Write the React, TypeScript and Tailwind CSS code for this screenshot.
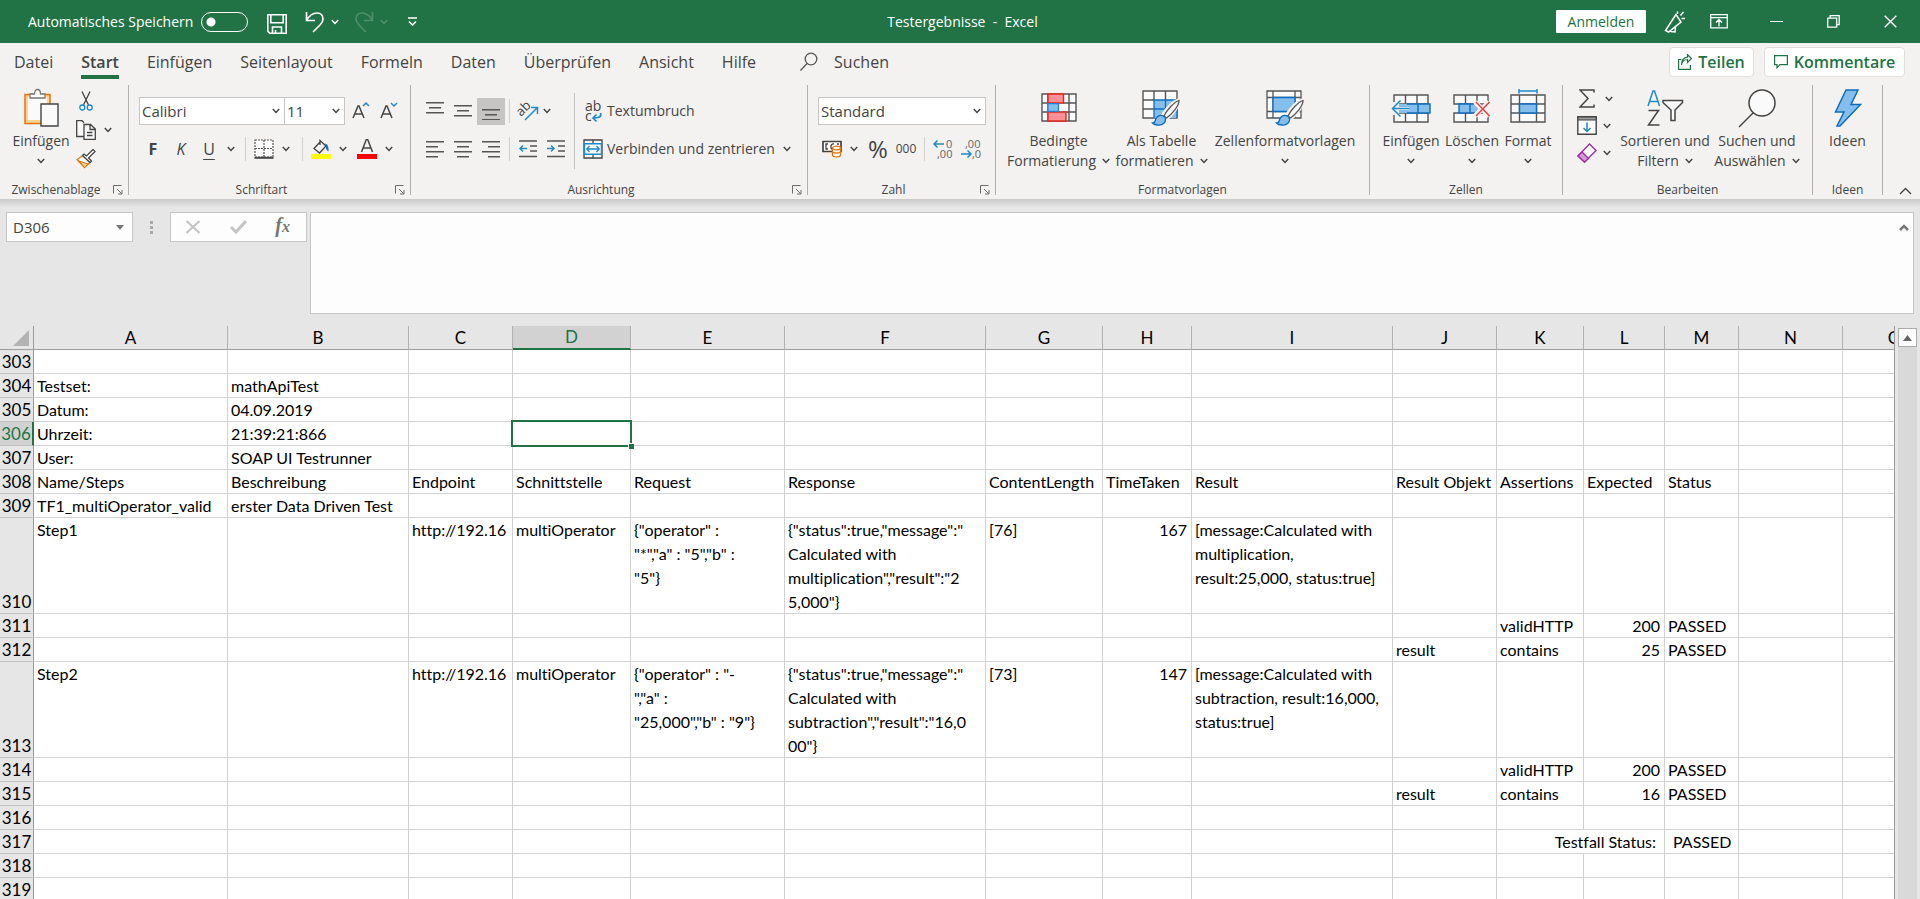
import { useState } from "react";
import type { ReactNode } from "react";

interface Column {
    id: string;
    width: string;
}

interface Row {
    n: number;
    tall?: boolean;
    cells?: Record<string, string>;
}

const COLUMNS: Column[] = [
    { id: "A", width: "w-[194px]" },
    { id: "B", width: "w-[181px]" },
    { id: "C", width: "w-[104px]" },
    { id: "D", width: "w-[118px]" },
    { id: "E", width: "w-[154px]" },
    { id: "F", width: "w-[201px]" },
    { id: "G", width: "w-[117px]" },
    { id: "H", width: "w-[89px]" },
    { id: "I", width: "w-[201px]" },
    { id: "J", width: "w-[104px]" },
    { id: "K", width: "w-[87px]" },
    { id: "L", width: "w-[81px]" },
    { id: "M", width: "w-[74px]" },
    { id: "N", width: "w-[104px]" },
    { id: "O", width: "w-[104px]" },
];

const ROWS: Row[] = [
    { n: 303 },
    { n: 304, cells: { A: "Testset:", B: "mathApiTest" } },
    { n: 305, cells: { A: "Datum:", B: "04.09.2019" } },
    { n: 306, cells: { A: "Uhrzeit:", B: "21:39:21:866" } },
    { n: 307, cells: { A: "User:", B: "SOAP UI Testrunner" } },
    {
        n: 308,
        cells: {
            A: "Name/Steps", B: "Beschreibung", C: "Endpoint", D: "Schnittstelle", E: "Request", F: "Response",
            G: "ContentLength", H: "TimeTaken", I: "Result", J: "Result Objekt", K: "Assertions", L: "Expected", M: "Status",
        },
    },
    { n: 309, cells: { A: "TF1_multiOperator_valid", B: "erster Data Driven Test" } },
    {
        n: 310,
        tall: true,
        cells: {
            A: "Step1",
            C: "http://192.16",
            D: "multiOperator",
            E: '{"operator" :\n"*","a" : "5","b" :\n"5"}',
            F: '{"status":true,"message":"\nCalculated with\nmultiplication","result":"2\n5,000"}',
            G: "[76]",
            H: "167",
            I: "[message:Calculated with\nmultiplication,\nresult:25,000, status:true]",
        },
    },
    { n: 311, cells: { K: "validHTTP", L: "200", M: "PASSED" } },
    { n: 312, cells: { J: "result", K: "contains", L: "25", M: "PASSED" } },
    {
        n: 313,
        tall: true,
        cells: {
            A: "Step2",
            C: "http://192.16",
            D: "multiOperator",
            E: '{"operator" : "-\n","a" :\n"25,000","b" : "9"}',
            F: '{"status":true,"message":"\nCalculated with\nsubtraction","result":"16,0\n00"}',
            G: "[73]",
            H: "147",
            I: "[message:Calculated with\nsubtraction, result:16,000,\nstatus:true]",
        },
    },
    { n: 314, cells: { K: "validHTTP", L: "200", M: "PASSED" } },
    { n: 315, cells: { J: "result", K: "contains", L: "16", M: "PASSED" } },
    { n: 316 },
    { n: 317, cells: { K: "Testfall Status:", M: "PASSED" } },
    { n: 318 },
    { n: 319 },
];

const TABS = ["Datei", "Start", "Einfügen", "Seitenlayout", "Formeln", "Daten", "Überprüfen", "Ansicht", "Hilfe"];

/* ---------- small helpers ---------- */

function Chevron({ className = "" }: { className?: string }) {
    return (
        <svg width="8" height="6" viewBox="0 0 8 6" fill="none" stroke="currentColor" strokeWidth="1.5" className={`inline-block shrink-0 ${className}`}>
            <path d="M.8 1 4 4.4 7.2 1" />
        </svg>
    );
}

function MenuButton({ label, className = "w-4" }: { label: string; className?: string }) {
    return (
        <button aria-label={label} className={`flex h-[27px] items-center justify-center ${className}`}>
            <Chevron />
        </button>
    );
}

function IconButton({ label, active = false, children }: { label: string; active?: boolean; children: ReactNode }) {
    return (
        <button aria-label={label} className={`flex h-[27px] w-7 shrink-0 items-center justify-center ${active ? "bg-[#c6c5c4]" : ""}`}>
            {children}
        </button>
    );
}

function Separator() {
    return <span className="mx-1 h-6 w-px shrink-0 bg-[#d2d0ce]" />;
}

function Group({ title, width, launcher = false, children }: { title: string; width: string; launcher?: boolean; children: ReactNode }) {
    return (
        <section className={`flex h-[110px] shrink-0 flex-col border-r border-[#b1afad] ${width}`}>
            <div className="flex flex-1">{children}</div>
            <div className="flex h-2.5 items-center text-xs">
                <span className="flex-1 text-center">{title}</span>
                {launcher && (
                    <button aria-label={`${title}: Optionen`} className="mr-1 flex w-3 justify-center">
                        <svg width="10" height="10" viewBox="0 0 10 10" fill="none" stroke="#6b6b6b">
                            <path d="M.5 8.500V.5H8.500M4 4l4.500 4.500M9 5v4H5" />
                        </svg>
                    </button>
                )}
            </div>
        </section>
    );
}

function BigButton({ icon, lines, width, menu = true }: { icon: ReactNode; lines: string[]; width: string; menu?: boolean }) {
    return (
        <button className={`flex flex-col items-center text-sm leading-5 whitespace-nowrap ${width}`}>
            <span className="flex h-[46px] items-center justify-center">{icon}</span>
            <span>{lines[0]}</span>
            <span className="flex h-5 items-center gap-1.5">
                {lines[1]}
                {menu && <Chevron />}
            </span>
        </button>
    );
}

function Lines({ widths, align, y = 0 }: { widths: number[]; align: "left" | "center" | "right"; y?: number }) {
    return (
        <svg width="18" height="18" viewBox="0 0 18 18" fill="#555">
            {widths.map((w, i) => (
                <rect key={i} x={align === "left" ? 0 : align === "right" ? 18 - w : (18 - w) / 2} y={y + i * 5} width={w} height="1.500" />
            ))}
        </svg>
    );
}

/* ---------- title bar ---------- */

function TitleBar() {
    const [autoSave, setAutoSave] = useState(false);

    return (
        <header className="flex h-[43px] shrink-0 items-center bg-[#217346] text-sm text-white">
            <div className="flex flex-1 items-center pl-7">
                <label htmlFor="autosave" className="w-[173px]">Automatisches Speichern</label>
                <input
                    id="autosave"
                    type="checkbox"
                    checked={autoSave}
                    onChange={(e) => setAutoSave(e.target.checked)}
                    className="h-5 w-[47px] appearance-none rounded-full border border-white bg-[radial-gradient(circle_at_9px_9px,white_4px,transparent_5px)]"
                />
                <button aria-label="Speichern" className="mt-1 ml-[19px]">
                    <svg width="20" height="20" viewBox="0 0 20 20" fill="none" stroke="#fff" strokeWidth="1.6">
                        <path d="M.8.8h18.400v18.400H2.800L.8 17.200ZM3.800.8v8h12.400v-8M5.500 19v-6h9v6M8.500 19v-3" />
                    </svg>
                </button>
                <button aria-label="Rückgängig" className="ml-[18px]">
                    <svg width="20" height="22" viewBox="0 0 20 22" fill="none" stroke="#fff" strokeWidth="1.700">
                        <path d="M1.500 1v8.500H10M1.500 9.500C4 5 8 2 12 2c4 0 6 3 6 6 0 2-1 4-3 6l-7 7" />
                    </svg>
                </button>
                <MenuButton label="Rückgängig-Liste" className="ml-0.5 w-4" />
                <button aria-label="Wiederholen" className="ml-[11px] text-[#4e8f6b]">
                    <svg width="20" height="22" viewBox="0 0 20 22" fill="none" stroke="currentColor" strokeWidth="1.700">
                        <path d="M18.500 1v8.500H10M18.500 9.500C16 5 12 2 8 2 4 2 2 5 2 8c0 2 1 4 3 6l7 7" />
                    </svg>
                </button>
                <span className="text-[#4e8f6b]"><MenuButton label="Wiederholen-Liste" className="ml-0.5 w-4" /></span>
                <button aria-label="Symbolleiste anpassen" className="ml-4">
                    <svg width="9" height="9" viewBox="0 0 9 9" fill="none" stroke="#fff" strokeWidth="1.500">
                        <path d="M0 1h9M1 4.500 4.500 8 8 4.500" />
                    </svg>
                </button>
            </div>
            <h1 className="whitespace-pre">Testergebnisse  -  Excel</h1>
            <div className="flex flex-1 items-center justify-end pr-[23px]">
                <button className="h-[23px] w-[90px] rounded-[1px] bg-white leading-[23px] text-[#217346]">Anmelden</button>
                <button aria-label="Neuigkeiten" className="ml-[18px]">
                    <svg width="22" height="22" viewBox="0 0 22 22" fill="none" stroke="#fff" strokeWidth="1.500">
                        <path d="M12 3.500 1.500 19.500l3 1.500L17 11ZM6.500 20.500l4.500.5.5-5M13.500 3V.5M16.500 4.500l3-3.500M17.500 7.500h3.500" />
                    </svg>
                </button>
                <button aria-label="Menüband anzeigen" className="ml-6">
                    <svg width="18" height="15" viewBox="0 0 18 15" fill="none" stroke="#fff" strokeWidth="1.300">
                        <path d="M.7.7h16.600v13.200H.7ZM.7 3.700h16.600M9 12.500V6M6 8.500l3-3 3 3" />
                    </svg>
                </button>
                <button aria-label="Minimieren" className="ml-[42px] h-px w-[13px] bg-white" />
                <button aria-label="Verkleinern" className="ml-11">
                    <svg width="13" height="13" viewBox="0 0 13 13" fill="none" stroke="#fff" strokeWidth="1.300">
                        <path d="M.7 3.200h9v9h-9ZM3.200 3V.7h9v9H10" />
                    </svg>
                </button>
                <button aria-label="Schließen" className="ml-11">
                    <svg width="13" height="13" viewBox="0 0 13 13" fill="none" stroke="#fff" strokeWidth="1.400">
                        <path d="m.7.7 11.600 11.600M12.300.7.7 12.300" />
                    </svg>
                </button>
            </div>
        </header>
    );
}

/* ---------- tabs ---------- */

function TabBar() {
    return (
        <nav className="flex h-[42px] shrink-0 items-center pb-1 text-base leading-5">
            {TABS.map((tab) => (
                <button
                    key={tab}
                    className={`mx-3.5 flex h-[34px] flex-col justify-center border-y-4 border-transparent ${tab === "Start" ? "border-b-[#217346] font-semibold" : ""}`}
                >
                    {tab}
                </button>
            ))}
            <button className="ml-[30px] flex items-center gap-4">
                <svg width="18" height="20" viewBox="0 0 18 20" fill="none" stroke="#555" strokeWidth="1.300">
                    <circle cx="11" cy="7" r="5.800" />
                    <path d="m7 11.500-6.500 7" />
                </svg>
                Suchen
            </button>
            <div className="ml-auto flex gap-2.5 pr-[15px] font-semibold text-[#217346]">
                <button className="flex h-[30px] w-[85px] items-center justify-center gap-1.5 rounded border border-[#e1dfdd] bg-white">
                    <svg width="14" height="16" viewBox="0 0 14 16" fill="none" stroke="currentColor" strokeWidth="1.200">
                        <path d="M3.500 5.500H.6v9.800h11.800V11M3.500 11c.5-4 3-5.500 6-5.500V8.500l4-4-4-4v2.700C5.500 3.500 3.500 7 3.500 11Z" />
                    </svg>
                    Teilen
                </button>
                <button className="flex h-[30px] w-[141px] items-center justify-center gap-1.5 rounded border border-[#e1dfdd] bg-white">
                    <svg width="14" height="14" viewBox="0 0 14 14" fill="none" stroke="currentColor" strokeWidth="1.200">
                        <path d="M.6.6h12.800v9H6L3 12.800V9.600H.6Z" />
                    </svg>
                    Kommentare
                </button>
            </div>
        </nav>
    );
}

/* ---------- ribbon icons ---------- */

const PasteIcon = () => (
    <svg width="36" height="40" viewBox="0 0 36 40" fill="none">
        <path d="M2 6.500h25v29H2Z" fill="#fbd58f" stroke="#e8730c" strokeWidth="1.500" />
        <path d="M5 9h19v23H5Z" fill="#fafafa" />
        <path d="M7 10V6h4.500c0-6 6-6 6 0H22v4Z" fill="#fff" stroke="#777" strokeWidth="1.300" />
        <path d="M18 16h17v22H18Z" fill="#fafafa" stroke="#444" strokeWidth="1.400" />
    </svg>
);

const CutIcon = () => (
    <svg width="14" height="20" viewBox="0 0 14 20" fill="none" strokeWidth="1.300">
        <path d="M3 .5 9.500 14M11 .5 4.500 14" stroke="#444" />
        <circle cx="3.300" cy="16.500" r="2.500" stroke="#1e8bcd" />
        <circle cx="10.700" cy="16.500" r="2.500" stroke="#1e8bcd" />
    </svg>
);

const CopyIcon = () => (
    <svg width="20" height="20" viewBox="0 0 20 20" fill="#fafafa" stroke="#444" strokeWidth="1.300">
        <path d="M8 16.500H.7V.7H6l2 2" />
        <path d="M8 4.500h6.500L19.300 9v10.300H8ZM14 4.500V9.500h5M11 12.500h5.500M11 15.500h5.500" />
    </svg>
);

const BrushIcon = () => (
    <svg width="20" height="20" viewBox="0 0 20 20" fill="none">
        <path d="M7 6.500 1 10.500 8.500 18.500 14 13.500Z" fill="#fff" stroke="#e8730c" strokeWidth="1.300" />
        <path d="m3 12 9 3-3.500 3.500Z" fill="#fbd58f" stroke="#e8730c" />
        <path d="m6.500 6.500 7.500 7 1.500-1.500-3-3 6.500-6.500-2-2L10.500 7 8 5Z" fill="#fff" stroke="#444" strokeWidth="1.300" />
    </svg>
);

const FillIcon = () => (
    <svg width="20" height="20" viewBox="0 0 20 20" fill="none">
        <path d="M9.500 2.500 3 9.500l5.500 4.500L15 7 9 1.500V6" stroke="#444" strokeWidth="1.300" />
        <path d="M13.500 4.500c3 0 4.500 3 4 8-2-1-3-3-2.500-5.500Z" fill="#1e6fb8" />
        <rect y="15" width="20" height="5" fill="#ff0" />
    </svg>
);

const BordersIcon = () => (
    <svg width="20" height="20" viewBox="0 0 20 20" fill="none" stroke="#555">
        <path d="M1 1h18v17H1ZM10 1v17M1 9.500h18" fill="#fff" strokeDasharray="2 1" strokeWidth="1.200" />
        <path d="M.5 18.800h19" strokeWidth="2" stroke="#444" />
    </svg>
);

const OrientationIcon = () => (
    <svg width="22" height="22" viewBox="0 0 22 22" fill="none" className="overflow-visible">
        <text x="1" y="14" fontSize="13" fill="#444" transform="rotate(-45 6 12)">ab</text>
        <path d="M8 20 20 8M14 7.500h6.500V14" stroke="#1e8bcd" strokeWidth="1.500" />
    </svg>
);

const IndentIcon = ({ right = false }: { right?: boolean }) => (
    <svg width="18" height="18" viewBox="0 0 18 18" fill="none" stroke="#555" strokeWidth="1.500">
        <path d="M0 1h18M11 6h7M11 11h7M0 16.500h18" />
        <path d={right ? "M0 8.500h7M4 5.500l3 3-3 3" : "M8 8.500H1M4 5.500l-3 3 3 3"} stroke="#1e8bcd" />
    </svg>
);

const WrapIcon = () => (
    <svg width="18" height="21" viewBox="0 0 18 21" fill="none" className="overflow-visible">
        <text x="1" y="10" fontSize="14" fill="#444">ab</text>
        <text x="1" y="20" fontSize="14" fill="#444">c</text>
        <path d="M16.500 12c1.500 4-2 5-7 5M12.500 13.500 9 17l3.500 3.500" stroke="#1e8bcd" strokeWidth="1.700" />
    </svg>
);

const MergeIcon = () => (
    <svg width="20" height="20" viewBox="0 0 20 20" fill="none">
        <path d="M1 1h18v18H1ZM10 1v4M10 15v4" fill="#fafafa" stroke="#444" strokeWidth="1.300" />
        <path d="M1.500 4.700h17v10.600h-17Z" fill="#fafafa" stroke="#1e8bcd" strokeWidth="1.500" />
        <path d="M4 10h12M6.500 7 3.800 10l2.700 3M13.500 7l2.700 3-2.700 3" stroke="#1e8bcd" strokeWidth="1.300" />
    </svg>
);

const CurrencyIcon = () => (
    <svg width="20" height="18" viewBox="0 0 20 18" fill="none">
        <path d="M1 1.500h18v10H1Z" fill="#fff" stroke="#444" strokeWidth="1.700" />
        <path d="M6 4H4v5h2M12 4c-4-1-4 6-1 5M15 4h2" stroke="#444" strokeWidth="1.300" />
        <path d="M10.500 8v7c0 2.500 8 2.500 8 0V8Z" fill="#fff" stroke="#e8730c" strokeWidth="1.300" />
        <ellipse cx="14.500" cy="8" rx="4" ry="1.800" fill="#fff" stroke="#e8730c" strokeWidth="1.300" />
        <path d="M10.500 11.500c0 2 8 2 8 0" stroke="#e8730c" strokeWidth="1.300" />
    </svg>
);

const DecimalIcon = ({ more = false }: { more?: boolean }) => (
    <svg width="20" height="22" viewBox="0 0 20 22" fill="none" className="overflow-visible">
        <text x={more ? 13 : 4} y="10" fontSize="11" fill="#666">{more ? "0" : ",00"}</text>
        <text x={more ? 4 : 11} y="20" fontSize="11" fill="#666">{more ? ",00" : ",0"}</text>
        <path d={more ? "M11 6H1M4.500 2.500 1 6l3.500 3.500" : "M0 16h10M6.500 12.500 10 16l-3.500 3.500"} stroke="#1e8bcd" strokeWidth="1.500" />
    </svg>
);

const ConditionalIcon = () => (
    <svg width="36" height="30" viewBox="0 0 36 30" fill="none">
        <path d="M1 1h34v27H1ZM1 10h34M1 19h34M7 1v27M28 1v27" fill="#fafafa" stroke="#555" strokeWidth="1.400" />
        <path d="M17 10.500h5v8h-5Z" fill="#fafafa" />
        <path d="M7 1h15.500v9H7ZM7 19h18v9H7Z" fill="#ff8f94" stroke="#e0281e" strokeWidth="1.400" />
        <path d="M7 10.700h10.500v7.600H7Z" fill="#83beec" stroke="#2a7fc9" strokeWidth="1.200" />
    </svg>
);

const PaintBrush = () => (
    <>
        <path d="M36.500 10c-5 1-13 9-16.500 16l4 3.500c6-4 13-13 12.500-19.500Z" fill="#fafafa" stroke="#f3f2f1" strokeWidth="3" />
        <path d="M37 10.500C32 12 25 20 22 26l2.500 2C30 24 37 16 37 10.500Z" fill="#fafafa" stroke="#555" strokeWidth="1.300" />
        <path d="M10.500 33c3 0 2.500-2 3.500-4.500 2-4 7-4 9-1 2 4-2 8-7 7.500-2.500 0-4.500-.7-5.500-2Z" fill="#83beec" stroke="#0f6cbd" strokeWidth="1.300" />
    </>
);

const TableFormatIcon = () => (
    <svg width="39" height="36" viewBox="0 0 39 36" fill="none">
        <path d="M1 1h34v27H1Z" fill="#fafafa" stroke="#555" strokeWidth="1.400" />
        <path d="M12 10h23v18H12Z" fill="#83beec" />
        <path d="M1 10h11M1 19h11M12 1v9M23.500 1v9" stroke="#555" strokeWidth="1.400" />
        <path d="M12 28V10h23v18M12 19h23M23.500 10v18" stroke="#0f6cbd" strokeWidth="1.300" />
        <PaintBrush />
    </svg>
);

const CellStylesIcon = () => (
    <svg width="39" height="36" viewBox="0 0 39 36" fill="none">
        <path d="M1 1h34v27H1ZM1 7.500h34M1 21.500h34M7 1v27M29 1v27" fill="#fafafa" stroke="#555" strokeWidth="1.300" />
        <path d="M7 7.500h22v14H7Z" fill="#83beec" stroke="#0f6cbd" strokeWidth="1.300" />
        <PaintBrush />
    </svg>
);

const InsertCellsIcon = () => (
    <svg width="40" height="38" viewBox="0 0 40 38" fill="none">
        <path d="M3 6h34v27H3ZM3 15h34M3 24h34M14.500 6v27M26 6v27" fill="#fafafa" stroke="#555" strokeWidth="1.400" />
        <path d="M0 13h8v13H0Z" fill="#f3f2f1" />
        <path d="M8 15h31v9H8Z" fill="#83beec" />
        <path d="M16 15h23v9H16M27 15v9" stroke="#0f6cbd" strokeWidth="1.400" />
        <path d="M18 19.500H1.500M9.500 11l-8.500 8.500L9.500 28" stroke="#f3f2f1" strokeWidth="3" />
        <path d="M18 19.500H1.500M9.500 11.500l-8 8 8 8" stroke="#1e8bcd" strokeWidth="1.500" />
    </svg>
);

const DeleteCellsIcon = () => (
    <svg width="38" height="38" viewBox="0 0 38 38" fill="none">
        <path d="M1 6h34v9H1ZM1 24h34v9H1ZM12.500 6v9M24 6v9M12.500 24v9M24 24v9" fill="#fafafa" stroke="#555" strokeWidth="1.400" />
        <path d="M6 15h22v9H6Z" fill="#83beec" />
        <path d="M24 15H6v9h18M17 15v9" stroke="#0f6cbd" strokeWidth="1.400" />
        <path d="m22 13 14 14M36 13 22 27" stroke="#f3f2f1" strokeWidth="5" />
        <path d="m23 13 13.500 14M36.500 13 23 27" stroke="#f03e3e" strokeWidth="1.500" />
    </svg>
);

const FormatCellsIcon = () => (
    <svg width="36" height="38" viewBox="0 0 36 38" fill="none">
        <path d="M9 2h18M9 0v4.500M27 0v4.500" stroke="#1e8bcd" strokeWidth="1.500" />
        <path d="M1 6h34v27H1ZM1 15h34M1 24h34M9.500 6v27M26.500 6v27" fill="#fafafa" stroke="#555" strokeWidth="1.400" />
        <path d="M9.500 15h17v9h-17Z" fill="#83beec" stroke="#0f6cbd" strokeWidth="1.400" />
    </svg>
);

const SumIcon = () => (
    <svg width="16" height="19" viewBox="0 0 16 19" fill="none" stroke="#444" strokeWidth="1.500">
        <path d="M15 3.500V1H1l8 8.500L1 18h14v-2.500" />
    </svg>
);

const FillDownIcon = () => (
    <svg width="20" height="19" viewBox="0 0 20 19" fill="none">
        <path d="M.8.8h18.400v17.400H.8Z" fill="#fafafa" stroke="#444" strokeWidth="1.400" />
        <path d="M1 1h18v3H1Z" fill="#999" stroke="#444" />
        <path d="M10 6.500V15M6.500 12l3.500 3.500 3.500-3.500" stroke="#1e8bcd" strokeWidth="1.500" />
    </svg>
);

const EraserIcon = () => (
    <svg width="20" height="20" viewBox="0 0 20 20" fill="#fafafa" stroke="#9b2fa0" strokeWidth="1.400">
        <path d="M1 13 12.500 1 19 7.500 7.500 19Z" />
        <path d="m1 13 4-4 6.500 6.500-4 3.500Z" fill="#d59bd8" />
    </svg>
);

const SortFilterIcon = () => (
    <svg width="38" height="42" viewBox="0 0 38 42" fill="none">
        <path d="m2 19 5-15h1.500l5 15M3.500 14.500h8.500" stroke="#1e8bcd" strokeWidth="1.500" />
        <path d="M2.500 23.500h10L2.500 38h11" stroke="#444" strokeWidth="1.500" />
        <path d="M17 13.500h19.500v2L29 23v10.500h-4V23l-8-7.500Z" fill="#fafafa" stroke="#444" strokeWidth="1.500" />
    </svg>
);

const FindIcon = () => (
    <svg width="38" height="40" viewBox="0 0 38 40" fill="none" stroke="#444" strokeWidth="1.500">
        <circle cx="24" cy="15" r="13" fill="#fafafa" />
        <path d="M15 25 1 39" />
    </svg>
);

const IdeasIcon = () => (
    <svg width="28" height="40" viewBox="0 0 28 40">
        <path d="M12 2h12l-7 14.500h9.500L6 38H3l7-14H1.500Z" fill="#83beec" stroke="#0f6cbd" strokeWidth="1.500" />
    </svg>
);

/* ---------- ribbon ---------- */

function RibbonSelect({ label, value, className }: { label: string; value: string; className: string }) {
    return (
        <div className={`grid h-7 items-center border border-[#c8c6c4] bg-white text-[15px] ${className}`}>
            <select aria-label={label} className="col-start-1 row-start-1 w-full appearance-none px-0.5 outline-none">
                <option>{value}</option>
            </select>
            <Chevron className="pointer-events-none col-start-1 row-start-1 mr-1 justify-self-end" />
        </div>
    );
}

function Ribbon() {
    return (
        <div className="flex h-[114px] shrink-0">
            <Group title="Zwischenablage" width="w-[129px]" launcher>
                <div className="ml-2.5 flex"><BigButton icon={<PasteIcon />} lines={["Einfügen"]} width="w-[62px]" /></div>
                <div className="flex flex-col gap-0.5 pt-0.5">
                    <IconButton label="Ausschneiden"><CutIcon /></IconButton>
                    <div className="flex">
                        <IconButton label="Kopieren"><CopyIcon /></IconButton>
                        <MenuButton label="Kopieren-Optionen" />
                    </div>
                    <IconButton label="Format übertragen"><BrushIcon /></IconButton>
                </div>
            </Group>

            <Group title="Schriftart" width="w-[282px]" launcher>
                <div className="flex flex-col gap-2 pt-2.5 pl-2.5">
                    <div className="flex h-8 items-center">
                        <RibbonSelect label="Schriftart" value="Calibri" className="w-[146px]" />
                        <RibbonSelect label="Schriftgrad" value="11" className="mr-0.5 w-[60px] border-l-0" />
                        <IconButton label="Schriftgrad vergrößern">
                            <svg width="18" height="20" viewBox="0 0 18 20" fill="none" strokeWidth="1.500">
                                <path d="M1 17 6 5h1l5 12M2.500 13h8" stroke="#444" />
                                <path d="m11 5 3-3 3 3" stroke="#1e8bcd" />
                            </svg>
                        </IconButton>
                        <IconButton label="Schriftgrad verkleinern">
                            <svg width="18" height="20" viewBox="0 0 18 20" fill="none" strokeWidth="1.500">
                                <path d="M1 17 6 5h1l5 12M2.500 13h8" stroke="#444" />
                                <path d="m11 2 3 3 3-3" stroke="#1e8bcd" />
                            </svg>
                        </IconButton>
                    </div>
                    <div className="flex h-7 items-center text-base">
                        <IconButton label="Fett"><b>F</b></IconButton>
                        <IconButton label="Kursiv"><i>K</i></IconButton>
                        <IconButton label="Unterstrichen"><u className="underline-offset-4">U</u></IconButton>
                        <MenuButton label="Unterstreichen-Optionen" className="mr-0.5 w-4" />
                        <Separator />
                        <IconButton label="Rahmen"><BordersIcon /></IconButton>
                        <MenuButton label="Rahmen-Optionen" className="mr-1 w-4" />
                        <Separator />
                        <IconButton label="Füllfarbe"><FillIcon /></IconButton>
                        <MenuButton label="Füllfarben-Auswahl" className="mr-0.5 w-4" />
                        <IconButton label="Schriftfarbe">
                            <svg width="20" height="20" viewBox="0 0 20 20" fill="none">
                                <path d="M4.500 13 9.500 0h1l5 13M6 9h8" stroke="#444" strokeWidth="1.500" />
                                <rect y="15" width="20" height="5" fill="#f00" />
                            </svg>
                        </IconButton>
                        <MenuButton label="Schriftfarben-Auswahl" />
                    </div>
                </div>
            </Group>

            <Group title="Ausrichtung" width="w-[397px]" launcher>
                <div className="flex flex-col gap-2 pt-2.5 pl-2.5">
                    <div className="flex h-8 items-center">
                        <IconButton label="Oben"><Lines widths={[18, 12, 18]} align="center" y={0} /></IconButton>
                        <IconButton label="Mitte"><Lines widths={[18, 12, 18]} align="center" y={3} /></IconButton>
                        <IconButton label="Unten" active><Lines widths={[18, 12, 18]} align="center" y={7} /></IconButton>
                        <Separator />
                        <IconButton label="Textausrichtung"><OrientationIcon /></IconButton>
                        <MenuButton label="Textausrichtung-Optionen" className="w-2.5" />
                    </div>
                    <div className="flex h-7 items-center">
                        <IconButton label="Linksbündig"><Lines widths={[18, 12, 18, 12]} align="left" y={1} /></IconButton>
                        <IconButton label="Zentriert"><Lines widths={[18, 12, 18, 12]} align="center" y={1} /></IconButton>
                        <IconButton label="Rechtsbündig"><Lines widths={[18, 12, 18, 12]} align="right" y={1} /></IconButton>
                        <Separator />
                        <IconButton label="Einzug verkleinern"><IndentIcon /></IconButton>
                        <IconButton label="Einzug vergrößern"><IndentIcon right /></IconButton>
                    </div>
                </div>
                <span className="mx-1 mt-2 h-[76px] w-px bg-[#c8c6c4]" />
                <div className="flex flex-col gap-2 pt-2.5 text-sm">
                    <button className="flex h-8 items-center">
                        <span className="flex w-7 justify-center"><WrapIcon /></span>
                        Textumbruch
                    </button>
                    <div className="flex h-7 items-center">
                        <button className="flex items-center">
                            <span className="flex w-7 justify-center"><MergeIcon /></span>
                            Verbinden und zentrieren
                        </button>
                        <MenuButton label="Verbinden-Optionen" className="ml-1 w-4" />
                    </div>
                </div>
            </Group>

            <Group title="Zahl" width="w-[188px]" launcher>
                <div className="flex flex-col gap-2 pt-2.5 pl-2.5">
                    <div className="flex h-8 items-center">
                        <RibbonSelect label="Zahlenformat" value="Standard" className="w-[168px]" />
                    </div>
                    <div className="flex h-7 items-center">
                        <IconButton label="Buchhaltungsformat"><CurrencyIcon /></IconButton>
                        <MenuButton label="Währung wählen" className="mr-0.5 w-4" />
                        <IconButton label="Prozent"><span className="text-2xl leading-6">%</span></IconButton>
                        <IconButton label="Tausendertrennzeichen"><span className="text-xs">000</span></IconButton>
                        <Separator />
                        <IconButton label="Dezimalstelle hinzufügen"><DecimalIcon more /></IconButton>
                        <IconButton label="Dezimalstelle entfernen"><DecimalIcon /></IconButton>
                    </div>
                </div>
            </Group>

            <Group title="Formatvorlagen" width="w-[374px]">
                <div className="flex pl-2">
                    <BigButton icon={<ConditionalIcon />} lines={["Bedingte", "Formatierung"]} width="w-[109px]" />
                    <BigButton icon={<TableFormatIcon />} lines={["Als Tabelle", "formatieren"]} width="w-[97px]" />
                    <BigButton icon={<CellStylesIcon />} lines={["Zellenformatvorlagen"]} width="w-[150px]" />
                </div>
            </Group>

            <Group title="Zellen" width="w-[193px]">
                <div className="flex pl-2.5">
                    <BigButton icon={<InsertCellsIcon />} lines={["Einfügen"]} width="w-[62px]" />
                    <BigButton icon={<DeleteCellsIcon />} lines={["Löschen"]} width="w-[60px]" />
                    <BigButton icon={<FormatCellsIcon />} lines={["Format"]} width="w-[52px]" />
                </div>
            </Group>

            <Group title="Bearbeiten" width="w-[250px]">
                <div className="flex flex-col pl-2.5">
                    <div className="flex"><IconButton label="AutoSumme"><SumIcon /></IconButton><MenuButton label="Summen" /></div>
                    <div className="flex"><IconButton label="Ausfüllen"><FillDownIcon /></IconButton><MenuButton label="Ausfüllen-Optionen" className="w-3" /></div>
                    <div className="flex"><IconButton label="Löschen"><EraserIcon /></IconButton><MenuButton label="Löschen-Optionen" className="w-3" /></div>
                </div>
                <BigButton icon={<SortFilterIcon />} lines={["Sortieren und", "Filtern"]} width="w-[96px]" />
                <BigButton icon={<FindIcon />} lines={["Suchen und", "Auswählen"]} width="w-[88px]" />
            </Group>

            <Group title="Ideen" width="w-[70px]">
                <BigButton icon={<IdeasIcon />} lines={["Ideen"]} width="w-full" menu={false} />
            </Group>

            <div className="flex flex-1 items-end justify-end pr-2 pb-1">
                <button aria-label="Menüband reduzieren">
                    <svg width="13" height="8" viewBox="0 0 13 8" fill="none" stroke="#444" strokeWidth="1.400">
                        <path d="M1 7 6.500 1.500 12 7" />
                    </svg>
                </button>
            </div>
        </div>
    );
}

/* ---------- formula bar ---------- */

function FormulaBar() {
    return (
        <div className="h-[127px] shrink-0 bg-[linear-gradient(#c9c9c9,#e6e6e6_8px)] px-1.5 pt-[13px]">
            <div className="flex items-start">
                <div className="flex h-[30px] w-[127px] items-center border border-[#c6c6c6] bg-[#fdfdfd]">
                    <input aria-label="Namenfeld" defaultValue="D306" className="w-full min-w-0 flex-1 pl-1.5 text-[15px] outline-none" />
                    <button aria-label="Namen anzeigen" className="mr-2">
                        <svg width="8" height="5" viewBox="0 0 8 5" fill="#777"><path d="M0 0h8L4 5Z" /></svg>
                    </button>
                </div>
                <span className="mx-4 flex h-[30px] w-[5px] flex-col items-center justify-center gap-0.5">
                    <i className="h-[3px] w-[3px] bg-[#aaa]" />
                    <i className="h-[3px] w-[3px] bg-[#aaa]" />
                    <i className="h-[3px] w-[3px] bg-[#aaa]" />
                </span>
                <div className="mr-[3px] flex h-[30px] w-[137px] items-center justify-between border border-[#c6c6c6] bg-[#fdfdfd] px-3.5">
                    <button aria-label="Abbrechen">
                        <svg width="16" height="14" viewBox="0 0 16 14" stroke="#c4c4c4" strokeWidth="2.200"><path d="m1.500 1 13 12M14.500 1l-13 12" /></svg>
                    </button>
                    <button aria-label="Eingeben">
                        <svg width="17" height="14" viewBox="0 0 17 14" fill="none" stroke="#c4c4c4" strokeWidth="3"><path d="m1 7 5 5L16 1" /></svg>
                    </button>
                    <button aria-label="Funktion einfügen" className="pr-0.5 font-['Liberation_Serif',serif] text-xl leading-5 font-semibold text-[#777] italic">
                        f<span className="text-base">x</span>
                    </button>
                </div>
                <div className="flex h-[102px] flex-1 border border-[#c6c6c6] bg-[#fdfdfd]">
                    <textarea aria-label="Bearbeitungsleiste" className="flex-1 resize-none px-1 outline-none" />
                    <button aria-label="Nach oben" className="mt-2.5 mr-1 h-2">
                        <svg width="10" height="7" viewBox="0 0 10 7" fill="none" stroke="#777" strokeWidth="2.500"><path d="m1 6 4-4 4 4" /></svg>
                    </button>
                </div>
            </div>
        </div>
    );
}

/* ---------- sheet ---------- */

function SheetRow({ row }: { row: Row }) {
    const selected = row.n === 306;
    const isTotal = row.n === 317;

    return (
        <tr className={row.tall ? "h-24" : "h-6"}>
            <th
                scope="row"
                className={`border-r border-b border-b-[#c3c3c3] p-0 text-center align-bottom text-[17px] font-normal ${selected ? "border-r-2 border-r-[#217346] bg-[#d2d2d2] text-[#217346]" : "border-r-[#9b9b9b] bg-[#e6e6e6]"}`}
            >
                {row.n}
            </th>
            {COLUMNS.map(({ id }) => {
                // the total row spans K and L
                if (isTotal && id === "L") return null;
                const text = row.cells?.[id] ?? "";
                const right = /^\d+$/.test(text);
                const active = selected && id === "D";
                return (
                    <td
                        key={id}
                        colSpan={isTotal && id === "K" ? 2 : 1}
                        className={`border-r border-b border-[#d2d2d2] p-0 align-top whitespace-pre ${active ? "relative" : ""}`}
                    >
                        <div
                            className={`overflow-hidden ${row.tall ? "h-[95px] leading-6" : ""} ${right ? "pr-1 text-right" : isTotal && id === "K" ? "pr-2 text-right" : isTotal ? "pl-2" : "pl-[3px]"}`}
                        >
                            {text}
                        </div>
                        {active && (
                            <div className="absolute -inset-0.5 border-2 border-[#217346]">
                                <span className="absolute -right-1 -bottom-1 h-1.5 w-1.5 border-t border-l border-white bg-[#217346]" />
                            </div>
                        )}
                    </td>
                );
            })}
        </tr>
    );
}

function Sheet() {
    return (
        <main className="flex min-h-0 flex-1 bg-[#e6e6e6]">
            <div className="min-w-0 flex-1 overflow-hidden border-r border-[#9b9b9b]">
                <table className="w-[1947px] table-fixed border-separate border-spacing-0 bg-white font-[Lato,sans-serif] text-base leading-[23px] text-black [font-variant-ligatures:none]">
                    <thead>
                        <tr className="h-6 text-[17px] leading-[22px]">
                            <th className="w-[34px] border-r border-b border-[#9b9b9b] bg-[#e6e6e6] p-0">
                                <button aria-label="Alles auswählen" className="flex w-full justify-end pr-1">
                                    <svg width="16" height="16" viewBox="0 0 16 16" fill="#b3b3b3"><path d="M16 0v16H0Z" /></svg>
                                </button>
                            </th>
                            {COLUMNS.map(({ id, width }) => (
                                <th
                                    key={id}
                                    scope="col"
                                    className={`border-r border-r-[#b1b1b1] p-0 font-normal ${width} ${id === "D" ? "border-b-2 border-b-[#217346] bg-[#d2d2d2] text-[#217346]" : "border-b border-b-[#9b9b9b] bg-[#e6e6e6]"}`}
                                >
                                    {id}
                                </th>
                            ))}
                        </tr>
                    </thead>
                    <tbody>
                        {ROWS.map((row) => (
                            <SheetRow key={row.n} row={row} />
                        ))}
                    </tbody>
                </table>
            </div>
            <div className="flex w-[25px] flex-col items-stretch px-[3px] pt-0.5">
                <button aria-label="Nach oben scrollen" className="flex h-[19px] items-center justify-center border border-[#ababab] bg-white">
                    <svg width="9" height="6" viewBox="0 0 9 6" fill="#666"><path d="M0 6h9L4.500 0Z" /></svg>
                </button>
                <div className="flex-1 bg-[#d9d9d9]" />
            </div>
        </main>
    );
}

export default function App() {
    return (
        <div className="flex h-screen flex-col overflow-hidden bg-[#f3f2f1] font-['Open_Sans',sans-serif] text-[#444]">
            <TitleBar />
            <TabBar />
            <Ribbon />
            <FormulaBar />
            <Sheet />
        </div>
    );
}
